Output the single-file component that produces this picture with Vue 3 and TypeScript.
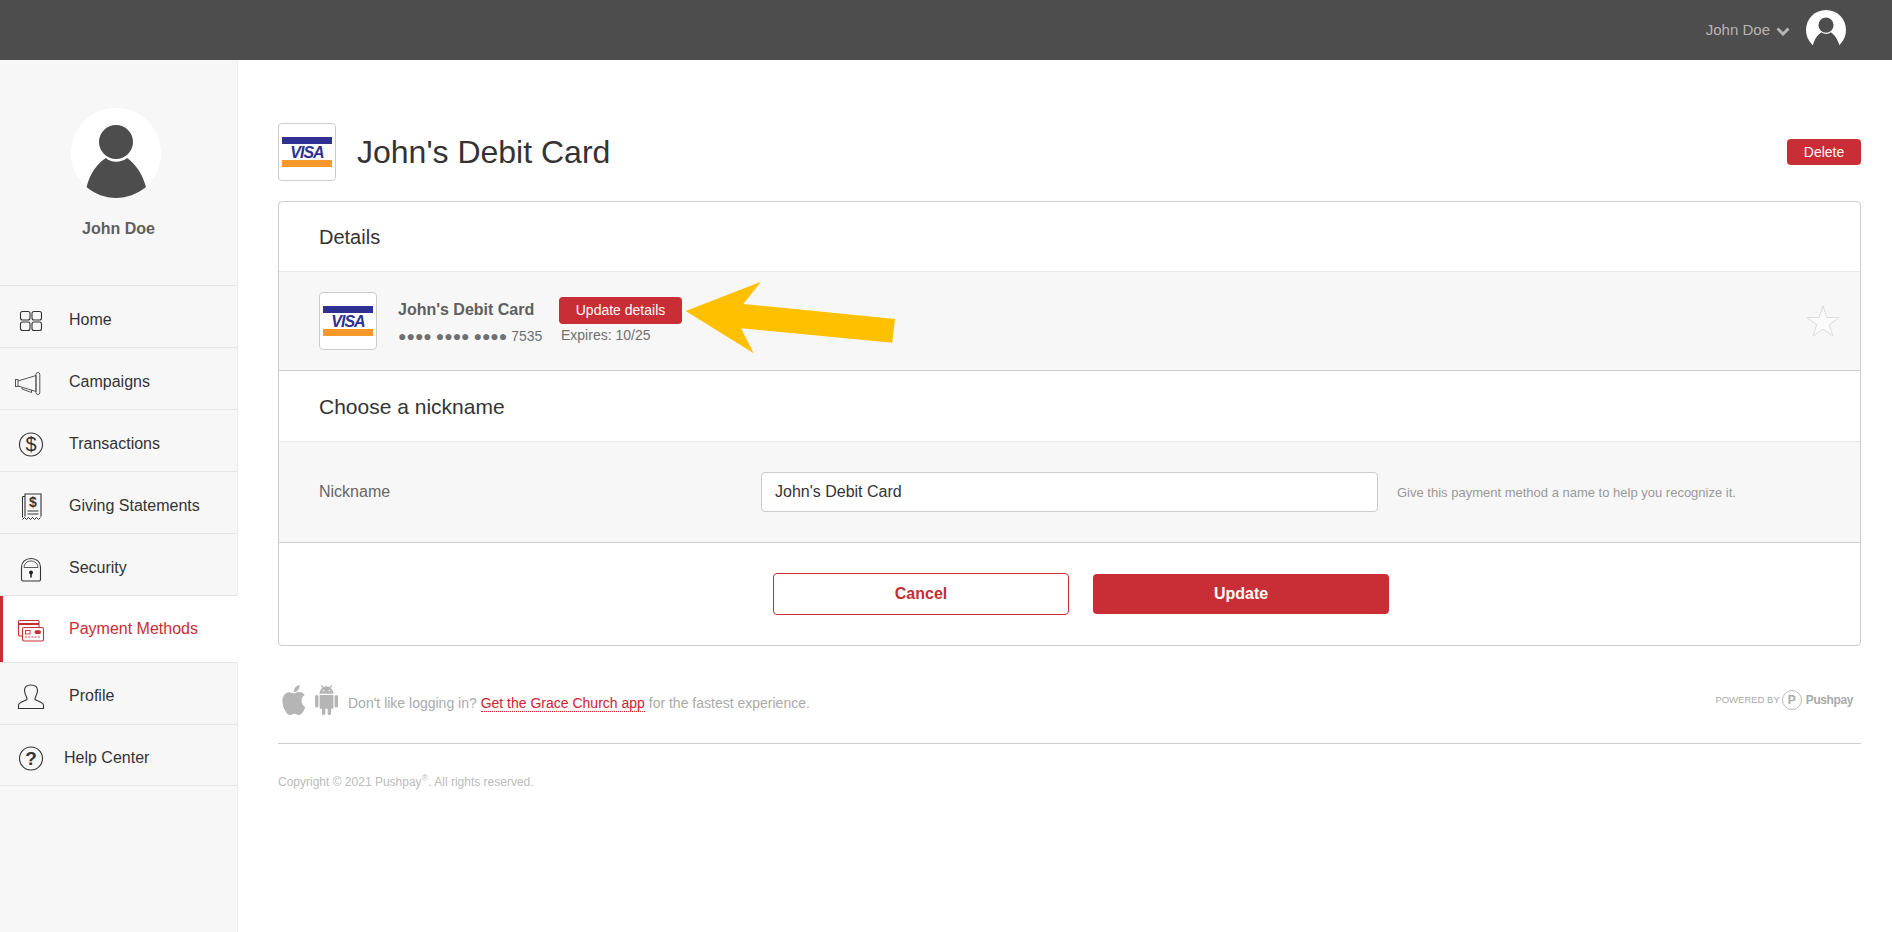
<script setup lang="ts">
const nickname: string = "John's Debit Card"
</script>

<template>
  <div class="page">
    <header class="topbar">
      <span class="top-name">John Doe</span>
      <svg class="chev" width="14" height="9" viewBox="0 0 14 9"><path d="M1.500 1.500 7 7l5.500-5.500" fill="none" stroke="#b5b5b5" stroke-width="3" /></svg>
      <svg class="top-avatar" width="40" height="40" viewBox="0 0 90 90">
        <circle cx="45" cy="45" r="45" fill="#fff" />
        <circle cx="45" cy="34" r="17" fill="#4d4d4d" />
        <path d="M15.500 79C19.500 64 27 55 35 50C40 55 50 55 56 50C63 55 71 64 75 79V90H15.500Z" fill="#4d4d4d" />
      </svg>
    </header>

    <div class="shell">
      <aside class="sidebar">
        <div class="profile">
          <svg class="big-avatar" width="90" height="90" viewBox="0 0 90 90">
            <circle cx="45" cy="45" r="45" fill="#fff" />
            <circle cx="45" cy="34" r="17" fill="#4d4d4d" />
            <path d="M15.500 79C19.500 64 27 55 35 50C40 55 50 55 56 50C63 55 71 64 75 79C66 86 56 90 45 90C34 90 24 86 15.500 79Z" fill="#4d4d4d" />
          </svg>
          <div class="profile-name">John Doe</div>
        </div>
        <nav class="nav">
          <a class="nav-item">
            <svg class="ic" viewBox="0 0 34 32"><g fill="none" stroke="#333" stroke-width="1.100"><rect x="6.500" y="7.500" width="9.500" height="8.500" rx="2" /><rect x="18" y="7.500" width="9.500" height="8.500" rx="2" /><rect x="6.500" y="18" width="9.500" height="8.500" rx="2" /><rect x="18" y="18" width="9.500" height="8.500" rx="2" /></g></svg>
            <span>Home</span>
          </a>
          <a class="nav-item">
            <svg class="ic" viewBox="0 0 34 32"><g fill="none" stroke="#555" stroke-width="1"><rect x="1.500" y="13.500" width="2.500" height="7" /><path d="M4 15 22 9.500V25.500L4 20" /><rect x="22" y="6.500" width="3.800" height="22" rx="1.900" /><path d="M8 21.500V23L17.500 26.500V24" /></g></svg>
            <span>Campaigns</span>
          </a>
          <a class="nav-item">
            <svg class="ic" viewBox="0 0 34 32"><circle cx="17" cy="16.500" r="11.500" fill="none" stroke="#333" stroke-width="1.100" /><text x="17" y="22.500" text-anchor="middle" class="ic-text">$</text></svg>
            <span>Transactions</span>
          </a>
          <a class="nav-item">
            <svg class="ic" viewBox="0 0 34 32"><g fill="none" stroke="#333" stroke-width="1"><path d="M11 6.500H8.500V27.500" /><path d="M11 26.500V4H27V26.500" stroke-width="1.100" /><path d="M8.500 29.500l2-2 2 2 2-2 2 2 2-2 2 2 2-2 2 2 2-2" /><path d="M13.500 21H24.500M13.500 24H24.500" /></g><text x="19" y="17" text-anchor="middle" class="ic-text-s">$</text></svg>
            <span>Giving Statements</span>
          </a>
          <a class="nav-item">
            <svg class="ic" viewBox="0 0 34 32"><g fill="none" stroke="#333" stroke-width="1.100"><path d="M7.500 15C7.500 10 11.500 6.500 17 6.500S26.500 10 26.500 15V27.500A1.500 1.500 0 0 1 25 29H9A1.500 1.500 0 0 1 7.500 27.500Z" /><path d="M10 15.500C10 12 13 9 17 9S24 12 24 15.500Z" stroke-width=".8" /></g><circle cx="17" cy="20.500" r="2" fill="#222" /><rect x="16.200" y="20.500" width="1.600" height="5" fill="#222" /></svg>
            <span>Security</span>
          </a>
          <a class="nav-item active">
            <svg class="ic" viewBox="0 0 34 32"><g fill="none" stroke="#c92d35" stroke-width="1.100"><path d="M8.500 23H5.500A1.500 1.500 0 0 1 4.500 21.500V8.500A1.500 1.500 0 0 1 6 7.500H23.500A1.500 1.500 0 0 1 25 8.500V14" /><path d="M4.500 11H25" stroke-width="2" /><rect x="8.500" y="14.500" width="21" height="13.500" rx="1.500" fill="#fff" /><rect x="11.500" y="17.500" width="4.500" height="3.500" stroke-width=".9" /><path d="M11 24H27" stroke-dasharray="2 1.200" stroke-width=".9" /></g><rect x="20.500" y="17.200" width="6.500" height="3.800" rx="1.900" fill="#c92d35" /></svg>
            <span>Payment Methods</span>
          </a>
          <a class="nav-item profile-item">
            <svg class="ic" viewBox="0 0 34 32"><path d="M4.500 28.500V25C4.500 22.500 10 21.500 13 19.500C13.500 17.500 10.500 14.500 10.500 10.500C10.500 7 13 5 17 5S23.500 7 23.500 10.500C23.500 14.500 20.500 17.500 21 19.500C24 21.500 29.500 22.500 29.500 25V28.500Z" fill="none" stroke="#333" stroke-width="1.100" /></svg>
            <span>Profile</span>
          </a>
          <a class="nav-item help">
            <svg class="ic" viewBox="0 0 34 32"><circle cx="17" cy="16.500" r="11.500" fill="none" stroke="#333" stroke-width="1.100" /><text x="17" y="22.500" text-anchor="middle" class="ic-text bold">?</text></svg>
            <span>Help Center</span>
          </a>
        </nav>
      </aside>

      <main class="main">
        <div class="title-row">
          <div class="visa">
            <i class="stripe blue"></i>
            <span class="visa-word">VISA</span>
            <i class="stripe orange"></i>
          </div>
          <h1 class="title">John's Debit Card</h1>
          <button class="btn-small delete">Delete</button>
        </div>

        <section class="card">
          <h2 class="card-head">Details</h2>
          <div class="gray detail-row">
            <div class="visa">
              <i class="stripe blue"></i>
              <span class="visa-word">VISA</span>
              <i class="stripe orange"></i>
            </div>
            <div class="detail-main">
              <div class="detail-name">John's Debit Card</div>
              <div class="detail-sub">●●●● ●●●● ●●●● 7535</div>
            </div>
            <div class="detail-side">
              <button class="btn-small update-details">Update details</button>
              <div class="detail-sub expires">Expires: 10/25</div>
            </div>
            <svg class="star" width="34" height="32" viewBox="0 0 34 32"><path d="M17 1 20.900 12.500H33L23.300 19.700 26.900 31 17 24.100 7.100 31 10.700 19.700 1 12.500H13.100Z" fill="#fbfbfb" stroke="#dcdcdc" /></svg>
          </div>
          <h2 class="card-head second">Choose a nickname</h2>
          <div class="gray nick-row">
            <label class="nick-label">Nickname</label>
            <input class="nick-input" :value="nickname" />
            <span class="nick-help">Give this payment method a name to help you recognize it.</span>
          </div>
          <div class="actions">
            <button class="btn cancel">Cancel</button>
            <button class="btn update">Update</button>
          </div>
        </section>

        <div class="foot-row">
          <div class="foot-left">
            <svg width="25" height="30" viewBox="3.500 3 16.500 18" preserveAspectRatio="none"><path fill="#b5b5b5" d="M17.050 20.280c-.98.95-2.050.8-3.080.35-1.090-.46-2.090-.48-3.240 0-1.440.62-2.200.44-3.060-.35C2.790 15.250 3.510 7.590 9.050 7.310c1.350.07 2.290.74 3.080.8 1.180-.24 2.310-.93 3.570-.84 1.510.12 2.650.72 3.400 1.800-3.120 1.870-2.380 5.980.48 7.130-.57 1.500-1.310 2.990-2.540 4.090zM12.030 7.250c-.15-2.230 1.660-4.070 3.740-4.250.29 2.580-2.340 4.500-3.740 4.250z" /></svg>
            <svg class="android" width="23" height="30" viewBox="2 0 20 24" preserveAspectRatio="none"><path fill="#b5b5b5" d="M6 18c0 .55.45 1 1 1h1v3.500c0 .83.67 1.500 1.500 1.500s1.500-.67 1.500-1.500V19h2v3.500c0 .83.67 1.500 1.500 1.500s1.500-.67 1.500-1.500V19h1c.55 0 1-.45 1-1V8H6v10zM3.500 8C2.670 8 2 8.670 2 9.500v7c0 .83.67 1.500 1.500 1.500S5 17.330 5 16.500v-7C5 8.670 4.330 8 3.500 8zm17 0c-.83 0-1.500.67-1.500 1.500v7c0 .83.67 1.500 1.500 1.500s1.500-.67 1.500-1.500v-7c0-.83-.67-1.500-1.500-1.500zm-4.970-5.840l1.300-1.300c.2-.2.2-.51 0-.71-.2-.2-.51-.2-.71 0l-1.480 1.480C13.850 1.230 12.950 1 12 1c-.96 0-1.860.23-2.660.63L7.850.15c-.2-.2-.51-.2-.71 0-.2.2-.2.51 0 .71l1.310 1.310C6.970 3.260 6 5.010 6 7h12c0-1.990-.97-3.750-2.470-4.840zM10 5H9V4h1v1zm5 0h-1V4h1v1z" /></svg>
            <p class="foot-text">Don't like logging in? <a class="foot-link">Get the Grace Church app</a> for the fastest experience.</p>
          </div>
          <div class="powered">
            <span class="powered-by">POWERED BY</span>
            <span class="powered-mark">P</span>
            <span class="powered-name">Pushpay</span>
          </div>
        </div>
        <div class="copyright">Copyright © 2021 Pushpay<sup>®</sup>. All rights reserved.</div>
      </main>
    </div>

    <svg class="arrow" width="212" height="74" viewBox="685 281 212 74"><path d="M685.700 311 761 281.700 743.300 304 895 319 892.300 342.700 741 328.300 753.700 353.300Z" fill="#ffc000" /></svg>
  </div>
</template>

<style>
html, body { margin: 0; background: #fff; }
</style>

<style scoped>
.page { position: relative; height: 932px; overflow: hidden; font-family: "Liberation Sans", Arial, sans-serif; color: #333; }
.topbar { height: 60px; background: #4d4d4d; display: flex; align-items: center; justify-content: flex-end; padding-right: 46px; }
.top-name { font-size: 15px; color: #b5b5b5; margin-bottom: 2px; }
.chev { margin-left: 6px; margin-top: 2px; }
.top-avatar { margin-left: 16px; }
.shell { display: flex; height: 872px; }
.sidebar { width: 237px; flex: none; background: #f7f7f7; border-right: 1px solid #eee; }
.profile { height: 225px; box-sizing: border-box; padding-top: 48px; display: flex; flex-direction: column; align-items: center; }
.big-avatar { display: block; margin-right: 5px; }
.profile-name { margin-top: 21px; font-size: 16px; line-height: 20px; font-weight: 700; color: #5f5f5f; }
.nav { border-top: 1px solid #e6e6e6; }
.nav-item { height: 62px; box-sizing: border-box; padding: 6px 0 0 14px; display: flex; align-items: center; border-bottom: 1px solid #e6e6e6; font-size: 16px; color: #333; }
.nav-item span { margin-left: 21px; }
.nav-item.profile-item { padding-top: 5px; }
.nav-item.help { height: 61px; padding-top: 5px; }
.nav-item.help span { margin-left: 16px; }
.nav-item.active { position: relative; height: 67px; padding-top: 0; width: 238px; background: #fff; color: #c92d35; box-shadow: inset 3px 0 0 #c92d35; }
.ic { width: 34px; height: 32px; flex: none; }
.ic-text { font-size: 20px; fill: #333; font-family: "Liberation Sans", sans-serif; }
.ic-text.bold { font-weight: 700; font-size: 19px; }
.ic-text-s { font-size: 14px; font-weight: 700; fill: #333; font-family: "Liberation Sans", sans-serif; }
.main { flex: 1; min-width: 0; padding: 63px 31px 0 40px; }
.title-row { display: flex; align-items: center; height: 58px; margin-bottom: 20px; }
.visa { width: 58px; height: 58px; box-sizing: border-box; flex: none; background: #fff; border: 1px solid #ccc; border-radius: 4px; padding: 13px 3px 0; display: flex; flex-direction: column; align-items: center; }
.stripe { display: block; width: 50px; height: 7px; flex: none; }
.stripe.blue { background: #2e3192; }
.stripe.orange { background: #f7982b; }
.visa-word { font-size: 16px; height: 16px; line-height: 18px; font-weight: 700; font-style: italic; letter-spacing: -1px; color: #2e3192; }
.title { margin: 0 0 0 21px; font-size: 32px; font-weight: 400; color: #333; }
.btn-small { font-family: inherit; font-size: 14px; color: #fff; background: #c92d35; border: 0; border-radius: 4px; padding: 0; }
.delete { margin-left: auto; width: 74px; height: 26px; }
.card { border: 1px solid #ccc; border-radius: 4px; }
.card-head { margin: 0; height: 70px; box-sizing: border-box; padding: 1px 0 0 40px; display: flex; align-items: center; font-size: 20px; font-weight: 400; color: #333; border-bottom: 1px solid #e8e8e8; }
.card-head.second { height: 71px; font-size: 21px; }
.gray { background: #f7f7f7; border-bottom: 1px solid #ccc; display: flex; align-items: center; padding-left: 40px; }
.detail-row { height: 99px; box-sizing: border-box; padding-right: 20px; }
.detail-main { margin-left: 21px; width: 144px; flex: none; padding-top: 2px; }
.detail-name { font-size: 16px; line-height: 20px; font-weight: 700; color: #5f5f5f; white-space: nowrap; }
.detail-sub { font-size: 14px; line-height: 18px; margin-top: 7px; color: #6f6f6f; white-space: nowrap; }
.detail-side { margin: -2px 0 0 17px; }
.update-details { display: block; width: 123px; height: 27px; }
.expires { margin: 2px 0 0 2px; }
.star { margin-left: auto; }
.nick-row { height: 101px; box-sizing: border-box; }
.nick-label { width: 442px; flex: none; font-size: 16px; color: #666; }
.nick-input { width: 617px; height: 40px; box-sizing: border-box; flex: none; border: 1px solid #ccc; border-radius: 4px; background: #fff; padding: 0 14px 0 13px; font-family: inherit; font-size: 16px; color: #333; outline: none; }
.nick-help { margin-left: 19px; font-size: 13px; color: #999; white-space: nowrap; }
.actions { height: 102px; box-sizing: border-box; padding-left: 494px; display: flex; align-items: center; gap: 24px; }
.btn { width: 296px; font-family: inherit; font-size: 16px; font-weight: 700; border-radius: 4px; }
.cancel { height: 42px; background: #fff; color: #c92d35; border: 1px solid #c92d35; }
.update { height: 40px; background: #c92d35; color: #fff; border: 0; }
.foot-row { margin-top: 39px; height: 59px; box-sizing: border-box; padding-bottom: 29px; border-bottom: 1px solid #ccc; display: flex; justify-content: space-between; align-items: center; }
.foot-left { display: flex; align-items: center; margin-left: 3px; }
.android { margin-left: 9px; }
.foot-text { margin: 7px 0 0 10px; font-size: 14px; color: #aaa; }
.foot-link { color: #d0202e; border-bottom: 1px dotted #d0202e; }
.powered { display: flex; align-items: center; margin-right: 8px; color: #aaa; }
.powered-by { font-size: 9.500px; }
.powered-mark { width: 18px; height: 18px; margin-left: 2px; border: 1px solid #bbb; border-radius: 50%; display: flex; align-items: center; justify-content: center; font-size: 12px; font-weight: 700; }
.powered-name { margin-left: 4px; font-size: 12px; font-weight: 700; letter-spacing: -.4px; }
.copyright { margin-top: 31px; font-size: 12px; line-height: 14px; color: #bbb; }
.copyright sup { font-size: 9px; line-height: 0; }
.arrow { position: absolute; left: 685px; top: 281px; pointer-events: none; }
</style>
